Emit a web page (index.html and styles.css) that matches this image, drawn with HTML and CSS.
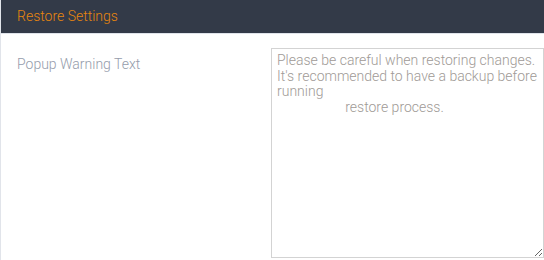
FILE: index.html
```html
<!DOCTYPE html>
<html lang="en">
<head>
    <meta charset="UTF-8">
    <meta name="viewport" content="width=device-width, initial-scale=1.0">
    <title>Restore Settings</title>
    <link rel="stylesheet" href="styles.css">
</head>
<body>
    <div class="panel">
        <div class="panel-heading">Restore Settings</div>
        <div class="panel-body">
            <div class="form-row">
                <label class="form-label" for="popup-text">Popup Warning Text</label>
                <textarea class="form-textarea" id="popup-text">Please be careful when restoring changes. It's recommended to have a backup before running
                    restore process.</textarea>
            </div>
        </div>
    </div>
</body>
</html>
```

FILE: styles.css
```css
body {
    font-family: Roboto, "Liberation Sans", sans-serif;
    font-size: 14px;
    font-weight: 300;
    margin: 0;
    padding: 0;
    background-color: #fff;
}
.panel {
    border-left: 1px solid #e1e4ea;
    height: 260px;
    box-sizing: border-box;
}
.panel-heading {
    background-color: #333a48; /* Dark slate header */
    color: #e8860e; /* Orange title */
    height: 33px;
    line-height: 32px;
    padding: 0 16px;
    border-bottom: 1px solid #dfe3ea;
}
.panel-body {
    padding: 14px 0 0 16px;
}
.form-row {
    display: flex;
    align-items: flex-start;
}
.form-label {
    width: 254px;
    flex-shrink: 0;
    padding-top: 8px;
    color: #959cab;
    line-height: 16px;
}
.form-textarea {
    flex: 1;
    height: 210px;
    box-sizing: border-box;
    margin: 0;
    padding: 4px 5px;
    border: 1px solid #d3d3d3;
    border-radius: 0;
    font-family: Roboto, "Liberation Sans", sans-serif;
    font-size: 14px;
    font-weight: 300;
    line-height: 15.7px;
    color: #a09a96;
    outline: none;
}
```
